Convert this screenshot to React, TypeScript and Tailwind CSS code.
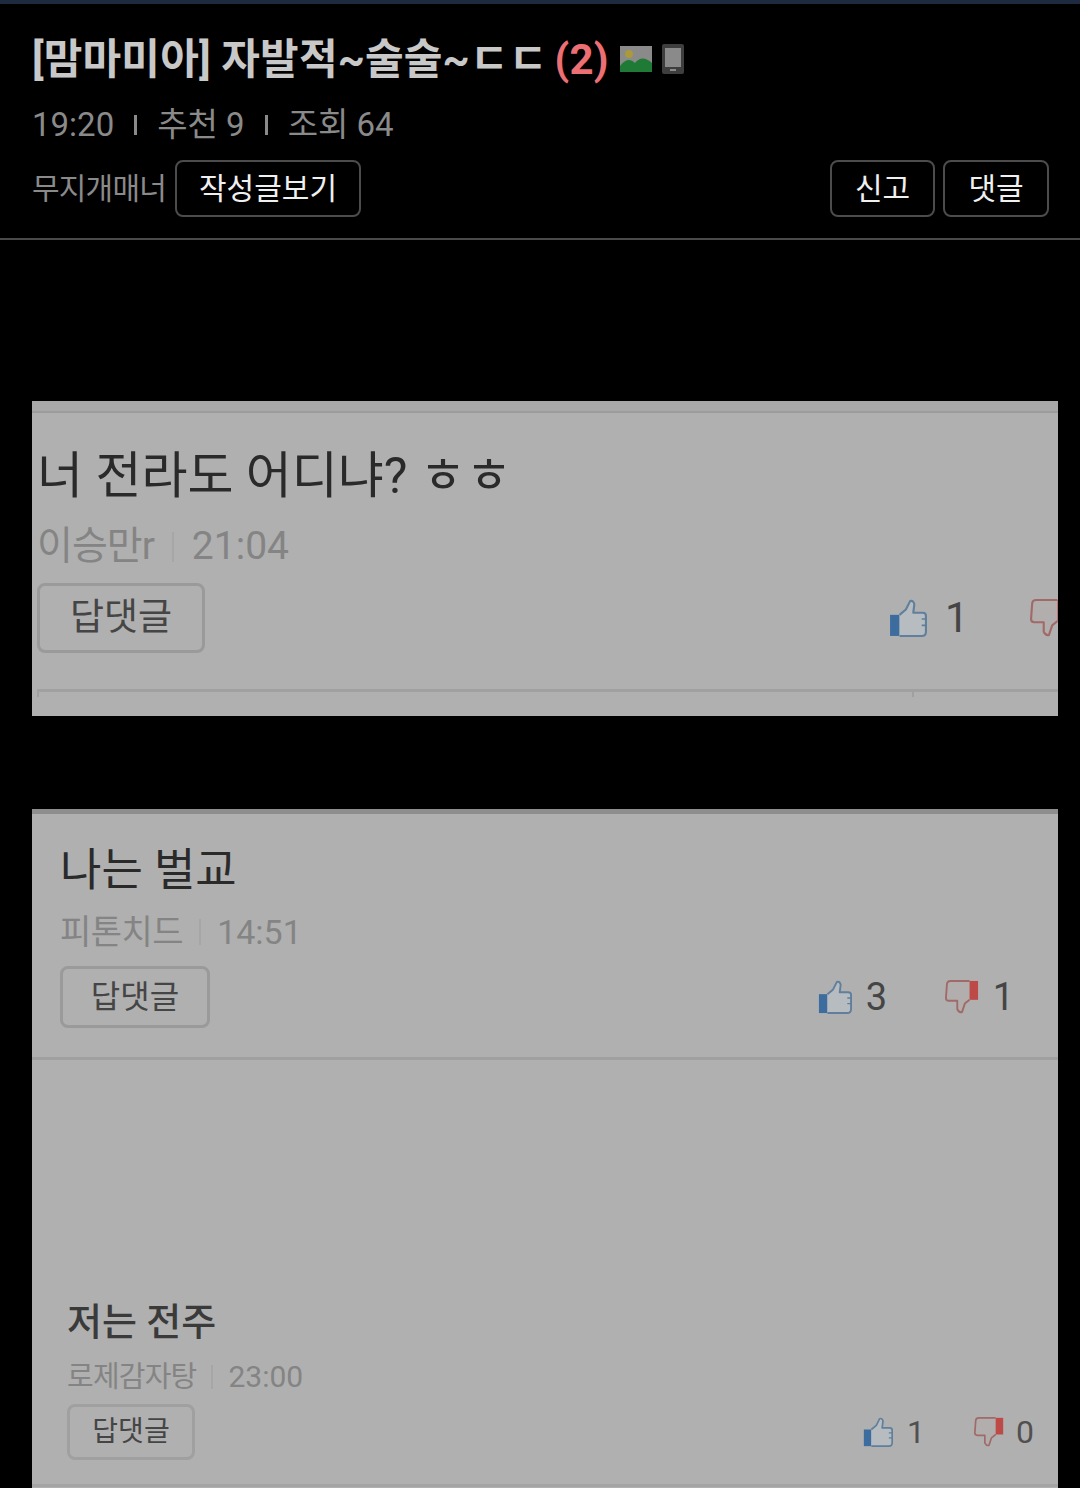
const font = { fontFamily: 'Roboto, "Noto Sans CJK KR", "Noto Sans", sans-serif' }

function ThumbUp({ className }: { className: string }) {
  return (
    <svg viewBox="0 0 36 36" className={className} fill="none">
      <rect x="1" y="15" width="9" height="20" fill="#3d6d9e" />
      <path
        d="M10 15 L16 10 L20 2 Q23 1 24 5 L23 13 L32 13 Q35 13 35 16 L35 31 Q35 35 31 35 L10 35"
        fill="#b6bcc0"
        stroke="#5f7f9c"
        strokeWidth="2"
        strokeLinejoin="round"
      />
      <path d="M31 19 L35 19 M31 25 L35 25" stroke="#5f7f9c" strokeWidth="1.5" />
    </svg>
  )
}

function ThumbDown({ className }: { className: string }) {
  return (
    <svg viewBox="0 0 36 36" className={className} fill="none">
      <path
        d="M26 1 L6 1 Q2 1 2 5 L1 19 Q1 22 4 22 L13 22 L13 31 Q15 35 18 34 L21 25 L26 21"
        fill="#b2aeae"
        stroke="#a06a68"
        strokeWidth="2"
        strokeLinejoin="round"
      />
      <rect x="26" y="1" width="9" height="20" fill="#bd4a47" />
    </svg>
  )
}

export default function App() {
  return (
    <div className="w-[1080px] h-[1488px] overflow-hidden bg-black" style={font}>
      <div className="h-[4px] bg-[#1e2a3f]" />
      <header className="h-[236px] border-b-2 border-[#4a4a4a] px-[32px] pt-[25px]">
        <div className="flex items-center h-[60px] text-[42px] font-bold tracking-[0.15px] text-[#c8c8c8] whitespace-nowrap">
          <span>[맘마미아] 자발적~술술~ㄷㄷ</span>
          <span className="ml-[7px] text-[#ec6f74]">(2)</span>
          <svg viewBox="0 0 32 26" className="ml-[11px] w-[32px] h-[26px]">
            <rect width="32" height="26" fill="#8a8a8a" />
            <circle cx="9" cy="8" r="4" fill="#a99a3c" />
            <path d="M0 20 Q8 10 15 17 Q22 8 32 17 L32 26 L0 26 Z" fill="#1e7a34" />
          </svg>
          <svg viewBox="0 0 22 30" className="ml-[10px] w-[22px] h-[30px]">
            <rect width="22" height="30" rx="2" fill="#3e3e3e" />
            <rect x="3" y="4" width="16" height="19" fill="#8a8a8a" />
            <rect x="8" y="25" width="6" height="2" fill="#8a8a8a" />
          </svg>
        </div>
        <div className="flex items-center h-[48px] mt-[12px] text-[33px] text-[#8a8a8a] whitespace-nowrap">
          <span>19:20</span>
          <span className="mx-[20px] w-[3px] h-[20px] bg-[#8a8a8a]" />
          <span>추천 9</span>
          <span className="mx-[20px] w-[3px] h-[20px] bg-[#8a8a8a]" />
          <span>조회 64</span>
        </div>
        <div className="flex items-center mt-[11px] whitespace-nowrap">
          <span className="text-[30px] tracking-[-0.8px] text-[#8a8a8a]">무지개매너</span>
          <button className="ml-[9px] w-[186px] h-[57px] rounded-[8px] border-2 border-[#4c4c4c] text-[30px] text-[#f0f0f0]">
            작성글보기
          </button>
          <button className="ml-auto w-[105px] h-[57px] rounded-[8px] border-2 border-[#4c4c4c] text-[30px] text-[#f0f0f0]">
            신고
          </button>
          <button className="ml-[8px] mr-[-1px] w-[106px] h-[57px] rounded-[8px] border-2 border-[#4c4c4c] text-[30px] text-[#f0f0f0]">
            댓글
          </button>
        </div>
      </header>

      <main className="pl-[32px] pr-[22px]">
        <section className="mt-[161px] h-[315px] overflow-hidden bg-[#b0b0b0] pl-[5px]">
          <div className="h-[12px] -ml-[5px] border-b-2 border-[#9c9c9c] bg-[#a8a8a8]" />
          <div className="pt-[28px] h-[70px] flex items-center text-[50px] text-[#2a2a2a] whitespace-nowrap mt-[14px]">
            너 전라도 어디냐? ㅎㅎ
          </div>
          <div className="flex items-center mt-[30px] text-[39px] leading-none text-[#848484] whitespace-nowrap">
            <span className="tracking-[-1px]">이승만r</span>
            <span className="mx-[18px] w-[2px] h-[30px] bg-[#a6a6a6]" />
            <span>21:04</span>
          </div>
          <div className="flex items-center justify-between mt-[17px]">
            <button className="w-[168px] h-[70px] rounded-[8px] border-[3px] border-[#9a9a9a] text-[37px] text-[#454545]">
              답댓글
            </button>
            <div className="mr-[-10px] flex items-center text-[42px] leading-none text-[#454545]">
              <ThumbUp className="w-[38px] h-[38px]" />
              <span className="ml-[18px] w-[85px]">1</span>
              <ThumbDown className="w-[38px] h-[38px]" />
            </div>
          </div>
          <div className="relative mt-[36px] h-[8px] border-t-[3px] border-l-[2px] border-[#a0a0a0]">
            <span className="absolute left-[873px] top-0 w-[2px] h-[5px] bg-[#a0a0a0]" />
          </div>
        </section>

        <section className="mt-[93px] h-[700px] overflow-hidden bg-[#b0b0b0] border-t-[5px] border-[#8e8e8e]">
          <div className="h-[246px] border-b-[3px] border-[#a0a0a0] pl-[28px] pr-[44px]">
            <div className="pt-[29px] text-[45px] leading-[56px] text-[#2a2a2a] whitespace-nowrap">나는 벌교</div>
            <div className="flex items-center mt-[16px] text-[34px] leading-none text-[#848484] whitespace-nowrap">
              <span className="tracking-[-0.5px]">피톤치드</span>
              <span className="mx-[16px] w-[2px] h-[26px] bg-[#a6a6a6]" />
              <span>14:51</span>
            </div>
            <div className="flex items-center justify-between mt-[17px]">
              <button className="w-[150px] h-[62px] rounded-[8px] border-[3px] border-[#9a9a9a] text-[32px] text-[#454545]">
                답댓글
              </button>
              <div className="flex items-center text-[38px] leading-none text-[#454545]">
                <ThumbUp className="w-[34px] h-[36px]" />
                <span className="ml-[14px] w-[34px]">3</span>
                <ThumbDown className="ml-[45px] w-[34px] h-[36px]" />
                <span className="ml-[14px]">1</span>
              </div>
            </div>
          </div>
          <div className="pt-[237px] pl-[35px] pr-[24px]">
            <div className="text-[38px] font-medium leading-[50px] text-[#3a3a3a] whitespace-nowrap">저는 전주</div>
            <div className="flex items-center mt-[15px] text-[30px] leading-none text-[#848484] whitespace-nowrap">
              <span className="text-[29px] tracking-[-0.8px]">로제감자탕</span>
              <span className="mx-[15px] w-[2px] h-[24px] bg-[#a6a6a6]" />
              <span>23:00</span>
            </div>
            <div className="flex items-center justify-between mt-[12px]">
              <button className="w-[128px] h-[56px] rounded-[8px] border-[3px] border-[#a0a0a0] text-[28px] text-[#454545]">
                답댓글
              </button>
              <div className="flex items-center text-[32px] leading-none text-[#505050]">
                <ThumbUp className="w-[30px] h-[30px]" />
                <span className="ml-[14px] w-[30px]">1</span>
                <ThumbDown className="ml-[37px] w-[30px] h-[30px]" />
                <span className="ml-[12px]">0</span>
              </div>
            </div>
          </div>
          <div className="mt-[24px] h-[3px] bg-[#a4a4a4]" />
        </section>
      </main>
    </div>
  )
}
